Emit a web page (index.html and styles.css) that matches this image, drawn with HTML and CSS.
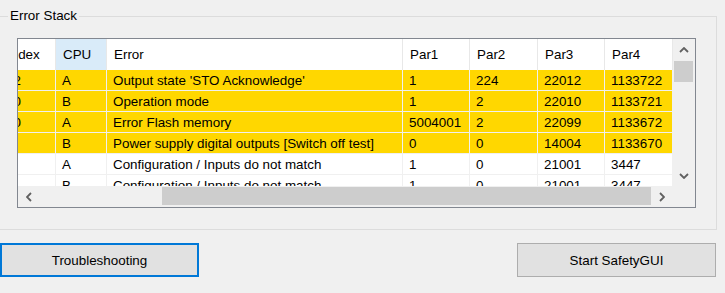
FILE: index.html
```html
<!DOCTYPE html>
<html lang="en">

<head>
    <meta charset="UTF-8">
    <meta name="viewport" content="width=device-width, initial-scale=1.0">
    <title>Error Stack</title>
    <link rel="stylesheet" href="styles.css">
</head>

<body>

    <fieldset class="group">
        <legend>Error Stack</legend>

        <div class="list">

            <div class="viewport">
                <div class="table">

                    <div class="head">
                        <div>Index</div>
                        <div class="sorted">CPU</div>
                        <div>Error</div>
                        <div>Par1</div>
                        <div>Par2</div>
                        <div>Par3</div>
                        <div>Par4</div>
                    </div>

                    <div class="rows">
                        <div class="row warn">
                            <div>12</div><div>A</div><div>Output state 'STO Acknowledge'</div>
                            <div>1</div><div>224</div><div>22012</div><div>1133722</div>
                        </div>
                        <div class="row warn">
                            <div>10</div><div>B</div><div>Operation mode</div>
                            <div>1</div><div>2</div><div>22010</div><div>1133721</div>
                        </div>
                        <div class="row warn">
                            <div>10</div><div>A</div><div>Error Flash memory</div>
                            <div>5004001</div><div>2</div><div>22099</div><div>1133672</div>
                        </div>
                        <div class="row warn">
                            <div>9</div><div>B</div><div>Power supply digital outputs [Switch off test]</div>
                            <div>0</div><div>0</div><div>14004</div><div>1133670</div>
                        </div>
                        <div class="row">
                            <div>8</div><div>A</div><div>Configuration / Inputs do not match</div>
                            <div>1</div><div>0</div><div>21001</div><div>3447</div>
                        </div>
                        <div class="row">
                            <div>7</div><div>B</div><div>Configuration / Inputs do not match</div>
                            <div>1</div><div>0</div><div>21001</div><div>3447</div>
                        </div>
                    </div>

                </div>
            </div>

            <div class="vscroll">
                <div class="arrow">
                    <svg width="10" height="6" viewBox="0 0 10 6"><path d="M1 5 L5 1 L9 5" fill="none" stroke="#606060" stroke-width="1.8"/></svg>
                </div>
                <div class="track">
                    <div class="thumb"></div>
                </div>
                <div class="arrow">
                    <svg width="10" height="6" viewBox="0 0 10 6"><path d="M1 1 L5 5 L9 1" fill="none" stroke="#606060" stroke-width="1.8"/></svg>
                </div>
            </div>

            <div class="hscroll">
                <div class="arrow">
                    <svg width="6" height="10" viewBox="0 0 6 10"><path d="M5 1 L1 5 L5 9" fill="none" stroke="#606060" stroke-width="1.8"/></svg>
                </div>
                <div class="track">
                    <div class="thumb"></div>
                </div>
                <div class="arrow">
                    <svg width="6" height="10" viewBox="0 0 6 10"><path d="M1 1 L5 5 L1 9" fill="none" stroke="#606060" stroke-width="1.8"/></svg>
                </div>
            </div>

            <div class="corner"></div>

        </div>
    </fieldset>

    <div class="buttons">
        <button class="button focused">Troubleshooting</button>
        <button class="button">Start SafetyGUI</button>
    </div>

</body>

</html>
```

FILE: styles.css
```css
body {
    margin: 0;
    width: 725px;
    height: 293px;
    overflow: hidden;
    background: #f0f0f0;
    color: #000;
    font-family: "Liberation Sans", Arial, sans-serif;
    font-size: 13.4px;
}

.group {
    margin: 8px 8px 0 -3px;
    padding: 14px 20px 21px 19px;
    border: 1px solid #dcdcdc;
    min-width: 0;
}

.group legend {
    margin-left: -9px;
    padding: 0 2px;
    line-height: 16px;
}

.list {
    display: grid;
    grid-template-columns: 1fr 22px;
    grid-template-rows: 147px 21px;
    border: 1px solid #828790;
    background: #fff;
}

.viewport {
    overflow: hidden;
}

/* scrolled sideways, the Index column is partly hidden */
.table {
    margin-left: -18px;
    width: 673px;
}

.head,
.row {
    display: grid;
    grid-template-columns: 55px 50px 295px 66px 67px 66px 67px;
    column-gap: 1px;
    padding-right: 1px;
}

.head {
    height: 31px;
    background: #e8e8e8;
}

.head div {
    background: #fff;
    padding: 0 7px;
    line-height: 31px;
    white-space: nowrap;
    overflow: hidden;
}

.head .sorted {
    background: #d9ebf9;
}

.rows {
    display: grid;
    row-gap: 1px;
    background: #f0f0f0;
}

.row {
    background: #f0f0f0;
}

.row div {
    background: #fff;
    height: 19px;
    padding: 1px 6px 0;
    line-height: 20px;
    white-space: nowrap;
    overflow: hidden;
}

.row.warn div {
    background: #ffd700;
}

/* scrollbars */

.vscroll,
.hscroll {
    display: flex;
    background: #f0f0f0;
}

.vscroll {
    flex-direction: column;
}

.arrow {
    display: flex;
    align-items: center;
    justify-content: center;
    flex: 0 0 21px;
}

.hscroll .arrow {
    flex-basis: 22px;
}

.track {
    flex: 1;
    display: flex;
}

.vscroll .track {
    flex-direction: column;
    padding: 1px 2px 0 1px;
}

.vscroll .thumb {
    height: 21px;
    background: #cdcdcd;
}

.hscroll .track {
    padding: 1px 0 2px 122px;
}

.hscroll .thumb {
    flex: 1;
    background: #cdcdcd;
}

.corner {
    background: #f0f0f0;
}

/* buttons */

.buttons {
    display: flex;
    justify-content: space-between;
    margin-top: 13px;
    padding-right: 9px;
}

.button {
    width: 199px;
    height: 34px;
    border: 1px solid #adadad;
    background: #e1e1e1;
    color: #000;
    font-family: inherit;
    font-size: 13.4px;
    padding: 0;
}

.button.focused {
    border: 2px solid #0078d7;
}
```
